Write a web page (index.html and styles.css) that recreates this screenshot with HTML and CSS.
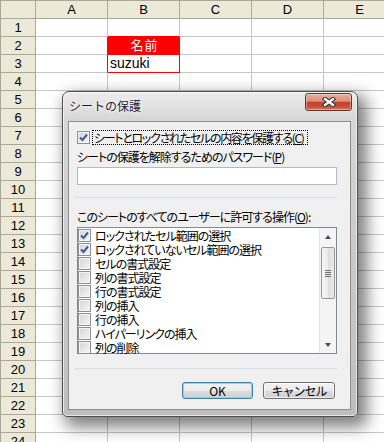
FILE: index.html
```html
<!DOCTYPE html>
<html lang="ja">
<head>
    <meta charset="UTF-8">
    <title>シートの保護</title>
    <link rel="stylesheet" href="styles.css">
</head>
<body>
    <div class="sheet">
        <div class="hd top num"></div><div class="hd top">A</div><div class="hd top">B</div><div class="hd top">C</div><div class="hd top">D</div><div class="hd top">E</div>
        <div class="hd num">1</div><div></div><div class="rb"></div><div></div><div></div><div></div>
        <div class="hd num">2</div><div class="rr"></div><div class="name-cell">名前</div><div></div><div></div><div></div>
        <div class="hd num">3</div><div class="rr"></div><div class="rr rb">suzuki</div><div></div><div></div><div></div>
        <div class="hd num">4</div><div></div><div></div><div></div><div></div><div></div>
        <div class="hd num">5</div><div></div><div></div><div></div><div></div><div></div>
        <div class="hd num">6</div><div></div><div></div><div></div><div></div><div></div>
        <div class="hd num">7</div><div></div><div></div><div></div><div></div><div></div>
        <div class="hd num">8</div><div></div><div></div><div></div><div></div><div></div>
        <div class="hd num">9</div><div></div><div></div><div></div><div></div><div></div>
        <div class="hd num">10</div><div></div><div></div><div></div><div></div><div></div>
        <div class="hd num">11</div><div></div><div></div><div></div><div></div><div></div>
        <div class="hd num">12</div><div></div><div></div><div></div><div></div><div></div>
        <div class="hd num">13</div><div></div><div></div><div></div><div></div><div></div>
        <div class="hd num">14</div><div></div><div></div><div></div><div></div><div></div>
        <div class="hd num">15</div><div></div><div></div><div></div><div></div><div></div>
        <div class="hd num">16</div><div></div><div></div><div></div><div></div><div></div>
        <div class="hd num">17</div><div></div><div></div><div></div><div></div><div></div>
        <div class="hd num">18</div><div></div><div></div><div></div><div></div><div></div>
        <div class="hd num">19</div><div></div><div></div><div></div><div></div><div></div>
        <div class="hd num">20</div><div></div><div></div><div></div><div></div><div></div>
        <div class="hd num">21</div><div></div><div></div><div></div><div></div><div></div>
        <div class="hd num">22</div><div></div><div></div><div></div><div></div><div></div>
        <div class="hd num">23</div><div></div><div></div><div></div><div></div><div></div>
        <div class="hd num">24</div><div></div><div></div><div></div><div></div><div></div>
    </div>

    <div class="dialog">
        <div class="titlebar">
            <span class="title">シートの保護</span>
            <button class="close">
                <svg width="14" height="10" viewBox="0 0 14 10">
                    <path d="M3 2 L11 8 M11 2 L3 8" stroke="#3a3a3a" stroke-width="4.4" stroke-linecap="square"/>
                    <path d="M3 2 L11 8 M11 2 L3 8" stroke="#fff" stroke-width="2.2" stroke-linecap="square"/>
                </svg>
            </button>
        </div>
        <div class="client">
            <div class="check-row">
                <span class="box checked"><svg width="11" height="11" viewBox="0 0 11 11"><path d="M2 5.5 L4.5 8 L9 2.5" fill="none" stroke="#3d5a9e" stroke-width="2"/></svg></span>
                <span class="focus">シートとロックされたセルの内容を保護する(<u>C</u>)</span>
            </div>
            <div class="lbl pwd-lbl">シートの保護を解除するためのパスワード(<u>P</u>)</div>
            <div class="input"></div>
            <div class="sep"></div>
            <div class="lbl ops-lbl">このシートのすべてのユーザーに許可する操作(<u>O</u>):</div>
            <div class="list">
                <ul class="items">
                    <li><span class="box checked"><svg width="11" height="11" viewBox="0 0 11 11"><path d="M2 5.5 L4.5 8 L9 2.5" fill="none" stroke="#3d5a9e" stroke-width="2"/></svg></span>ロックされたセル範囲の選択</li>
                    <li><span class="box checked"><svg width="11" height="11" viewBox="0 0 11 11"><path d="M2 5.5 L4.5 8 L9 2.5" fill="none" stroke="#3d5a9e" stroke-width="2"/></svg></span>ロックされていないセル範囲の選択</li>
                    <li><span class="box"></span>セルの書式設定</li>
                    <li><span class="box"></span>列の書式設定</li>
                    <li><span class="box"></span>行の書式設定</li>
                    <li><span class="box"></span>列の挿入</li>
                    <li><span class="box"></span>行の挿入</li>
                    <li><span class="box"></span>ハイパーリンクの挿入</li>
                    <li><span class="box"></span>列の削除</li>
                </ul>
                <div class="scrollbar">
                    <div class="arrow up"></div>
                    <div class="thumb"></div>
                    <div class="arrow down"></div>
                </div>
            </div>
            <div class="sep bottom-sep"></div>
            <div class="buttons">
                <button class="btn default">OK</button>
                <button class="btn">キャンセル</button>
            </div>
        </div>
    </div>
</body>
</html>
```

FILE: styles.css
```css
body {
    margin: 0;
    width: 384px;
    height: 442px;
    overflow: hidden;
    position: relative;
    background: #fff;
    font-family: "Liberation Sans", "Noto Sans CJK JP", sans-serif;
}

/* spreadsheet */
.sheet {
    display: grid;
    grid-template-columns: 36px repeat(5, 72px);
    grid-template-rows: 19px;
    grid-auto-rows: 18px;
}

.sheet > div {
    box-sizing: border-box;
    border-right: 1px solid #c6c6c6;
    border-bottom: 1px solid #c6c6c6;
    font-size: 14px;
    line-height: 17px;
    padding-left: 2px;
    white-space: nowrap;
    overflow: hidden;
}

.sheet > .hd {
    background: #ece9d8;
    border-color: #aca899;
    text-align: center;
    font-size: 13px;
    padding-left: 0;
}

.sheet > .top {
    border-top: 1px solid #aca899;
}

.sheet > .num {
    border-left: 1px solid #aca899;
}

.sheet > .rr {
    border-right-color: #f00;
}

.sheet > .rb {
    border-bottom-color: #f00;
}

.sheet > .name-cell {
    background: #f00;
    border-color: #f00;
    color: #fff;
    text-align: center;
    font-family: "Noto Sans CJK JP", sans-serif;
    font-size: 13px;
    line-height: 16px;
    letter-spacing: 1px;
    overflow: visible;
}

/* dialog */
.dialog {
    position: absolute;
    left: 62px;
    top: 91px;
    width: 296px;
    height: 326px;
    box-sizing: border-box;
    border: 1px solid #4f4f4f;
    border-radius: 7px 7px 5px 5px;
    background: linear-gradient(#ececec, #d6d6d6 28px, #cbcbcb 140px, #bebebe);
    box-shadow: inset 0 0 0 1px rgba(255, 255, 255, 0.65), 6px 7px 16px 3px rgba(0, 0, 0, 0.5);
    font-family: "Noto Sans CJK JP", sans-serif;
    font-size: 12px;
    color: #000;
}

.titlebar {
    height: 29px;
    padding-left: 6px;
    line-height: 27px;
}

.title {
    font-size: 12px;
    color: #1c1c3a;
    text-shadow: 0 0 5px #fff, 0 0 3px #fff;
}

.close {
    position: absolute;
    top: 1px;
    right: 5px;
    width: 47px;
    height: 18px;
    padding: 0;
    border: 1px solid #70312a;
    border-radius: 3px;
    background: linear-gradient(#eab0a2, #dd8d7c 45%, #c2432c 52%, #c84e36 80%, #d77a62);
    box-shadow: inset 0 0 0 1px rgba(255, 255, 255, 0.35);
    display: flex;
    align-items: center;
    justify-content: center;
}

.close svg {
    display: block;
}

.client {
    margin-left: 5px;
    width: 283px;
    height: 289px;
    box-sizing: border-box;
    border: 1px solid #8e8e8e;
    background: #f0f0f0;
    padding: 0 12px 0 8px;
    display: flex;
    flex-direction: column;
    font-feature-settings: "palt";
    letter-spacing: -1px;
}

.box {
    width: 13px;
    height: 13px;
    box-sizing: border-box;
    border: 1px solid #8e8f8f;
    background: linear-gradient(135deg, #d4d4d4, #f6f6f6);
    box-shadow: inset 0 0 0 1px #f4f4f4;
    display: flex;
    align-items: center;
    justify-content: center;
    flex-shrink: 0;
}

.box svg {
    display: block;
}

.check-row {
    margin-top: 8px;
    height: 15px;
    display: flex;
    align-items: center;
    gap: 2px;
}

.focus {
    border: 1px dotted #000;
    line-height: 13px;
    padding: 0 3px 0 1px;
    letter-spacing: -1.3px;
    white-space: nowrap;
}

.lbl {
    line-height: 14px;
    height: 14px;
    white-space: nowrap;
}

.pwd-lbl {
    margin-top: 5px;
}

.input {
    margin-top: 3px;
    width: 260px;
    height: 18px;
    box-sizing: border-box;
    border: 1px solid #b5b8bd;
    background: #fff;
}

.sep {
    margin-top: 12px;
    margin-left: -2px;
    width: 262px;
    height: 1px;
    background: #d5dfe5;
}

.ops-lbl {
    margin-top: 12px;
}

.list {
    margin-top: 3px;
    width: 260px;
    height: 127px;
    box-sizing: border-box;
    border: 1px solid #828790;
    background: #fff;
    display: flex;
}

.items {
    list-style: none;
    margin: 0;
    padding: 0;
    flex: 1;
}

.items li {
    height: 14px;
    line-height: 13px;
    display: flex;
    align-items: center;
    gap: 4px;
    white-space: nowrap;
}

.scrollbar {
    width: 17px;
    box-sizing: border-box;
    border-left: 1px solid #e4e4e4;
    background: #f4f4f4;
    display: flex;
    flex-direction: column;
    align-items: center;
}

.arrow {
    height: 17px;
    width: 100%;
    display: flex;
    align-items: center;
    justify-content: center;
}

.arrow::before {
    content: "";
    border-left: 3px solid transparent;
    border-right: 3px solid transparent;
}

.arrow.up::before {
    border-bottom: 4px solid #4d4d4d;
}

.arrow.down {
    margin-top: auto;
}

.arrow.down::before {
    border-top: 4px solid #4d4d4d;
}

.thumb {
    margin-top: 2px;
    width: 14px;
    height: 52px;
    box-sizing: border-box;
    border: 1px solid #979797;
    border-radius: 2px;
    background: linear-gradient(to right, #f7f7f7, #ebebeb 50%, #dedede 51%, #e9e9e9);
    display: flex;
    align-items: center;
    justify-content: center;
}

.thumb::before {
    content: "";
    width: 6px;
    height: 7px;
    background: repeating-linear-gradient(#6e6e6e 0, #6e6e6e 1px, transparent 1px, transparent 2px);
}

.bottom-sep {
    margin-top: 14px;
}

.buttons {
    margin-top: 13px;
    display: flex;
    justify-content: flex-end;
    gap: 10px;
    padding-right: 3px;
}

.btn {
    height: 17px;
    box-sizing: border-box;
    padding: 0;
    border: 1px solid #707070;
    border-radius: 3px;
    background: linear-gradient(#f2f2f2, #ebebeb 50%, #dddddd 51%, #cfcfcf);
    box-shadow: inset 0 0 0 1px rgba(255, 255, 255, 0.7);
    font-family: "Noto Sans CJK JP", sans-serif;
    font-size: 12px;
    line-height: 14px;
    letter-spacing: -1px;
    color: #000;
    width: 72px;
}

.btn.default {
    width: 71px;
    letter-spacing: 0;
    border-color: #3c7fb1;
    box-shadow: inset 0 0 0 1px #8fd3f7;
}
```
